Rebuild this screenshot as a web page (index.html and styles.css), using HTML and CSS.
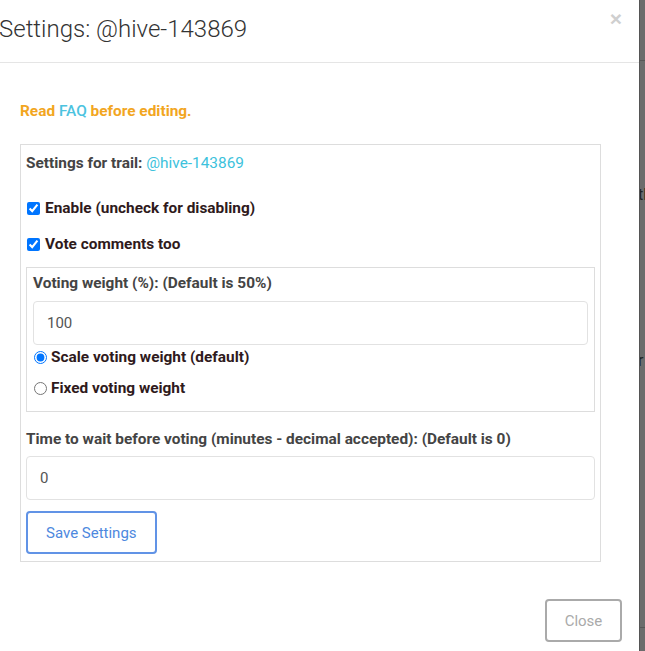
FILE: index.html
```html
<!DOCTYPE html>
<html lang="en">
<head>
    <meta charset="UTF-8">
    <title>Settings</title>
    <link rel="stylesheet" href="styles.css">
</head>
<body>
    <div class="backdrop">
        <div class="modal">
            <div class="modal-header">
                <h4 class="modal-title">Settings: @hive-143869</h4>
                <button class="close" type="button">&times;</button>
            </div>

            <div class="modal-body">
                <p class="warn">Read <a href="#">FAQ</a> before editing.</p>

                <div class="panel">
                    <div class="trail">Settings for trail: <a href="#">@hive-143869</a></div>

                    <label class="check first"><input type="checkbox" checked> Enable (uncheck for disabling)</label>
                    <label class="check"><input type="checkbox" checked> Vote comments too</label>

                    <div class="subpanel">
                        <div class="field-label">Voting weight (%): (Default is 50%)</div>
                        <input class="text-input" type="text" value="100">
                        <label class="radio first"><input type="radio" name="mode" checked> Scale voting weight (default)</label>
                        <label class="radio"><input type="radio" name="mode"> Fixed voting weight</label>
                    </div>

                    <div class="field-label wait">Time to wait before voting (minutes - decimal accepted): (Default is 0)</div>
                    <input class="text-input short-gap" type="text" value="0">

                    <button class="btn-save" type="button">Save Settings</button>
                </div>
            </div>

            <div class="modal-footer">
                <button class="btn-close" type="button">Close</button>
            </div>
        </div>

        <div class="page-edge">
            <span class="peek one">tl</span>
            <span class="peek two">r</span>
        </div>
    </div>
</body>
</html>
```

FILE: styles.css
```css
body {
    margin: 0;
    font-family: Roboto, "Liberation Sans", sans-serif;
    font-size: 15.4px;
    background: #fff;
}

.backdrop {
    display: flex;
    height: 651px;
    overflow: hidden;
}

.modal {
    width: 639px;
    flex-shrink: 0;
    background: #fff;
}

.modal-header {
    display: flex;
    justify-content: space-between;
    height: 62px;
    border-bottom: 1px solid #e5e5e5;
}

.modal-title {
    margin: 14px 0 0 -1px;
    font-size: 24px;
    font-weight: 300;
    line-height: 30px;
    color: #333;
}

.close {
    margin: 6px 17px 0 0;
    padding: 0;
    height: 26px;
    border: none;
    background: none;
    font-family: "Liberation Sans", sans-serif;
    font-size: 21px;
    font-weight: bold;
    line-height: 26px;
    color: #cfcfcf;
}

.modal-body {
    padding: 0 38px 0 20px;
}

.warn {
    margin: 0;
    padding-top: 38px;
    line-height: 20px;
    font-weight: bold;
    color: #f2a61f;
}

.warn a {
    color: #4cc3df;
    font-weight: 500;
    text-decoration: none;
}

.panel {
    margin-top: 23px;
    border: 1px solid #ddd;
    padding: 8px 5px 7px 5px;
}

.trail {
    line-height: 20px;
    font-weight: bold;
    color: #444;
}

.trail a {
    color: #3cc2dc;
    font-weight: normal;
    text-decoration: none;
}

.check,
.radio {
    display: flex;
    align-items: center;
    line-height: 20px;
    font-weight: bold;
    color: #2f1a1c;
}

.check input {
    margin: 0 5px 0 1px;
    width: 13px;
    height: 13px;
}

.check.first {
    margin-top: 25px;
}

.check + .check {
    margin-top: 16px;
}

.subpanel {
    margin-top: 13px;
    border: 1px solid #ddd;
    padding: 5px 6px 13px 6px;
}

.field-label {
    line-height: 20px;
    font-weight: bold;
    color: #444;
}

.field-label.wait {
    margin-top: 17px;
}

.text-input {
    display: block;
    box-sizing: border-box;
    width: 100%;
    height: 44px;
    margin-top: 8px;
    padding: 0 13px;
    border: 1px solid #e2e2e2;
    border-radius: 4px;
    font-family: inherit;
    font-size: 15px;
    color: #555;
}

.text-input.short-gap {
    margin-top: 7px;
}

.radio input {
    margin: 0 4px 0 1px;
    width: 13px;
    height: 13px;
}

.radio.first {
    margin-top: 2px;
}

.radio + .radio {
    margin-top: 11px;
}

.btn-save {
    display: block;
    margin-top: 11px;
    height: 43px;
    padding: 0 18px;
    border: 2px solid #6193e6;
    border-radius: 4px;
    background: #fff;
    font-family: inherit;
    font-size: 15px;
    color: #4d88de;
}

.modal-footer {
    display: flex;
    justify-content: flex-end;
    padding: 37px 17px 0 0;
}

.btn-close {
    width: 77px;
    height: 43px;
    border: 2px solid #aaa;
    border-radius: 4px;
    background: #fff;
    font-family: inherit;
    font-size: 15px;
    color: #aaa;
}

.page-edge {
    position: relative;
    flex: 1;
    overflow: hidden;
    background: #6c6c6c;
    border-left: 1px solid #555;
}

.page-edge::before,
.page-edge::after {
    content: "";
    position: absolute;
    left: 0;
    right: 0;
    height: 1px;
    background: #575757;
}

.page-edge::before {
    top: 60px;
}

.page-edge::after {
    top: 627px;
}

.peek {
    position: absolute;
    left: -2px;
    font-size: 16px;
    color: #222;
}

.peek.one {
    top: 185px;
}

.peek.two {
    top: 351px;
}
```
